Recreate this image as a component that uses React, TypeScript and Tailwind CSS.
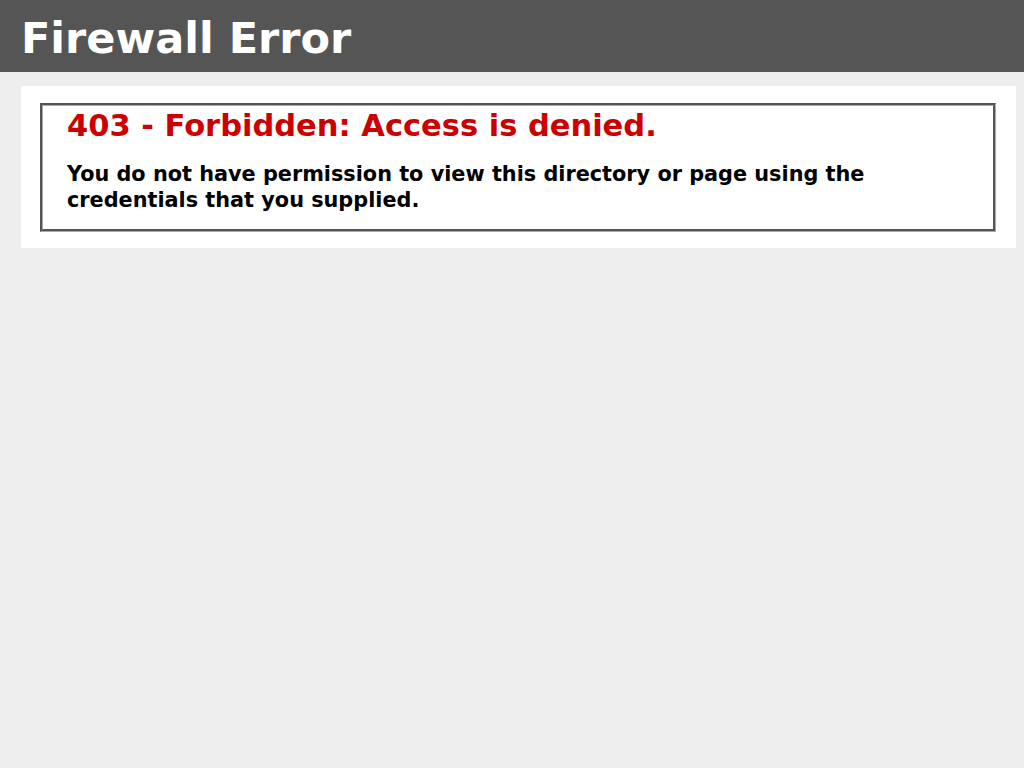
export default function App() {
  return (
    <div className="min-h-screen bg-[#eeeeee] font-['DejaVu_Sans',Verdana,sans-serif] text-[17.92px]">
      <div className="bg-[#555555] px-[21px] pb-[8px] pt-[12px]">
        <h1 className="m-0 text-[43px] font-bold leading-[52px] text-white">Firewall Error</h1>
      </div>
      <div className="ml-[21px] mr-[8px] mt-[14px] bg-white pb-[16px] pl-[19px] pr-[20px] pt-[17px]">
        <div className="border-[3px] border-[#a8a8a8] px-[24px] pb-[16px] pt-[2px] [border-style:groove]">
          <h2 className="m-0 text-[30.5px] font-bold leading-[36px] text-[#cc0000]">
            403 - Forbidden: Access is denied.
          </h2>
          <h3 className="mt-[17px] text-[20.8px] font-bold leading-[26px] text-black">
            You do not have permission to view this directory or page using the credentials that you supplied.
          </h3>
        </div>
      </div>
    </div>
  )
}
